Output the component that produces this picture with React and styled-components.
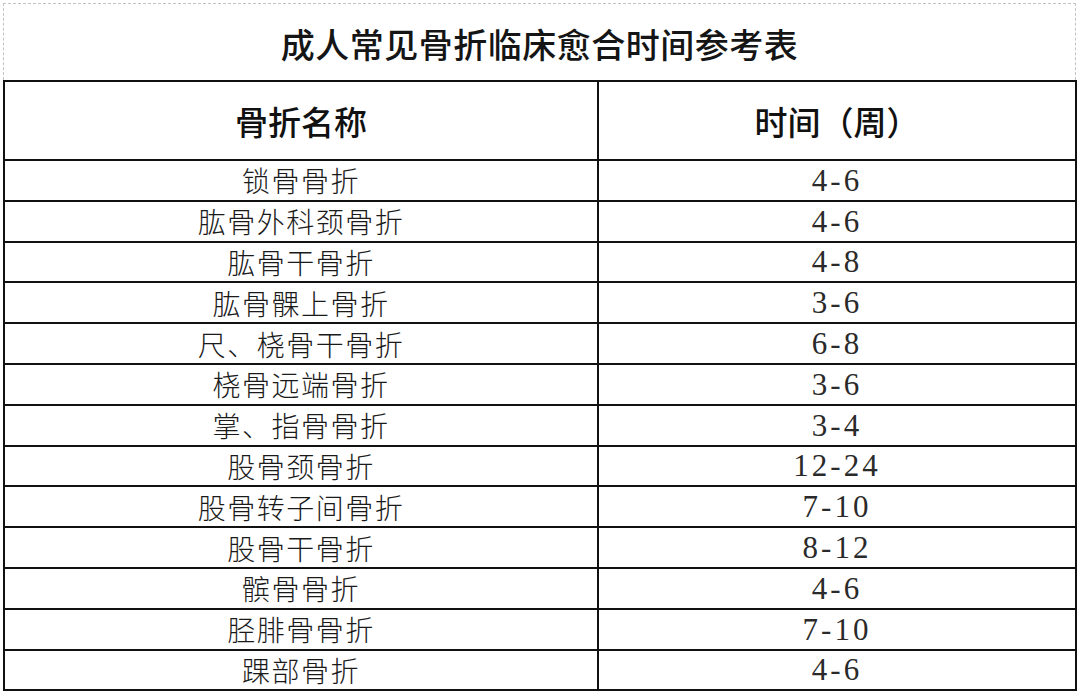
import React from 'react';
import styled, { createGlobalStyle } from 'styled-components';

const GlobalStyle = createGlobalStyle`
    html, body {
        margin: 0;
        padding: 0;
        background: #fff;
    }
    body {
        font-family: "Liberation Serif", "Noto Sans CJK SC", serif;
        color: #111;
    }
`;

const Page = styled.div`
    width: 1080px;
    height: 695px;
    padding: 3px 0 0 3px;
    box-sizing: border-box;
`;

const TitleBox = styled.div`
    width: 1073px;
    height: 77px;
    box-sizing: border-box;
    border: 1px dashed #c4c4c4;
    border-bottom: none;
    display: flex;
    align-items: center;
    justify-content: center;
    padding-top: 2px;
`;

const Title = styled.h1`
    margin: 0;
    font-family: "Noto Sans CJK SC", sans-serif;
    font-size: 34px;
    font-weight: 500;
    letter-spacing: 0.5px;
    color: #151515;
`;

const Table = styled.table`
    width: 1074px;
    border-collapse: collapse;
    table-layout: fixed;
    border: 2px solid #111;
`;

const HeadCell = styled.th`
    height: 77px;
    border: 2px solid #111;
    font-family: "Noto Sans CJK SC", sans-serif;
    font-size: 33px;
    font-weight: 500;
    padding: 0;
    text-align: center;
    vertical-align: middle;
`;

const Cell = styled.td`
    height: 38.8px;
    border: 2px solid #111;
    padding: 0;
    text-align: center;
    vertical-align: middle;
    font-size: ${props => props.num ? '31px' : '28px'};
    font-family: ${props => props.num ? '"Liberation Serif", serif' : '"Noto Sans CJK SC", sans-serif'};
    font-weight: ${props => props.num ? 400 : 300};
    letter-spacing: ${props => props.num ? '3px' : '1.5px'};
    line-height: 1;
    color: ${props => props.num ? '#2a2a2a' : '#1a1a1a'};
`;

const rows = [
    ['锁骨骨折', '4-6'],
    ['肱骨外科颈骨折', '4-6'],
    ['肱骨干骨折', '4-8'],
    ['肱骨髁上骨折', '3-6'],
    ['尺、桡骨干骨折', '6-8'],
    ['桡骨远端骨折', '3-6'],
    ['掌、指骨骨折', '3-4'],
    ['股骨颈骨折', '12-24'],
    ['股骨转子间骨折', '7-10'],
    ['股骨干骨折', '8-12'],
    ['髌骨骨折', '4-6'],
    ['胫腓骨骨折', '7-10'],
    ['踝部骨折', '4-6'],
];

export default function App() {
    return (
        <Page>
            <GlobalStyle />
            <TitleBox>
                <Title>成人常见骨折临床愈合时间参考表</Title>
            </TitleBox>
            <Table>
                <colgroup>
                    <col style={{ width: 594 }} />
                    <col />
                </colgroup>
                <thead>
                    <tr>
                        <HeadCell>骨折名称</HeadCell>
                        <HeadCell>时间（周）</HeadCell>
                    </tr>
                </thead>
                <tbody>
                    {rows.map(([name, weeks]) =>
                        <tr key={name}>
                            <Cell>{name}</Cell>
                            <Cell num>{weeks}</Cell>
                        </tr>
                    )}
                </tbody>
            </Table>
        </Page>
    );
}
